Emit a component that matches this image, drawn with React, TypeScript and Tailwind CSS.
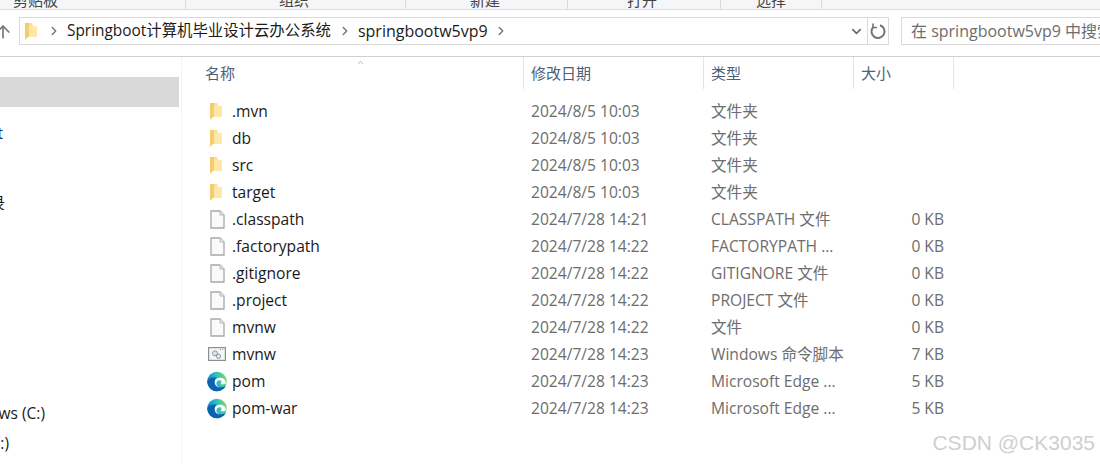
import { ChevronDown, ChevronRight, ChevronUp, ArrowUp } from "lucide-react";

const FONT = "font-['Open_Sans','Noto_Sans_CJK_SC',sans-serif]";

type Kind = "folder" | "file" | "script" | "edge";

const rows: { kind: Kind; name: string; date: string; type: string; size?: string }[] = [
  { kind: "folder", name: ".mvn", date: "2024/8/5 10:03", type: "文件夹" },
  { kind: "folder", name: "db", date: "2024/8/5 10:03", type: "文件夹" },
  { kind: "folder", name: "src", date: "2024/8/5 10:03", type: "文件夹" },
  { kind: "folder", name: "target", date: "2024/8/5 10:03", type: "文件夹" },
  { kind: "file", name: ".classpath", date: "2024/7/28 14:21", type: "CLASSPATH 文件", size: "0 KB" },
  { kind: "file", name: ".factorypath", date: "2024/7/28 14:22", type: "FACTORYPATH ...", size: "0 KB" },
  { kind: "file", name: ".gitignore", date: "2024/7/28 14:22", type: "GITIGNORE 文件", size: "0 KB" },
  { kind: "file", name: ".project", date: "2024/7/28 14:22", type: "PROJECT 文件", size: "0 KB" },
  { kind: "file", name: "mvnw", date: "2024/7/28 14:22", type: "文件", size: "0 KB" },
  { kind: "script", name: "mvnw", date: "2024/7/28 14:23", type: "Windows 命令脚本", size: "7 KB" },
  { kind: "edge", name: "pom", date: "2024/7/28 14:23", type: "Microsoft Edge ...", size: "5 KB" },
  { kind: "edge", name: "pom-war", date: "2024/7/28 14:23", type: "Microsoft Edge ...", size: "5 KB" },
];

function FolderIcon() {
  return (
    <svg width="12" height="18" viewBox="0 0 12 18" className="shrink-0">
      <path d="M0 1h7l1 3h4v11H0z" fill="#fbe094" />
      <path d="M4 4h8v11H4z" fill="#fde8a8" />
      <path d="M0 1h4v13l-4 4z" fill="#f5cd70" />
    </svg>
  );
}

function FileIcon() {
  return (
    <svg width="15" height="19" viewBox="0 0 15 19">
      <path d="M1 1h9l4 4v13H1z" fill="#fafafa" stroke="#a8a8a8" strokeWidth="1.300" />
      <path d="M10 1v4h4" fill="#ececec" stroke="#b5b5b5" />
    </svg>
  );
}

function ScriptIcon() {
  return (
    <svg width="18" height="14" viewBox="0 0 18 14">
      <rect x=".6" y=".6" width="16.800" height="12.800" fill="#f6f6f6" stroke="#8e8e8e" strokeWidth="1.200" />
      <path d="M12 2.500h4" stroke="#9a9a9a" strokeDasharray="1 1" />
      <circle cx="7" cy="6.300" r="2.500" fill="#dde3ea" stroke="#8a97a6" />
      <circle cx="10.500" cy="9.300" r="2.100" fill="#e6eaf0" stroke="#8a97a6" />
    </svg>
  );
}

function EdgeIcon() {
  return (
    <svg width="21" height="21" viewBox="0 0 22 22">
      <defs>
        <linearGradient id="edgeTop" x1="0" y1="0.600" x2="1" y2="0.300">
          <stop offset="0" stopColor="#0f7fc9" />
          <stop offset="0.500" stopColor="#27bcc9" />
          <stop offset="1" stopColor="#7bdc5f" />
        </linearGradient>
      </defs>
      <circle cx="11" cy="11" r="10.700" fill="url(#edgeTop)" />
      <path d="M.3 11.500C1 18 6 21.700 11 21.700c4 0 7.500-2 9.700-5.700-2.500 1.300-5 1.500-7 1-3-.8-5.200-3.400-5.200-6.200 0-2 1-3.200 2-4C6 6.200.8 7.500.3 11.500z" fill="#0b62ad" />
      <path d="M8.500 11.800c0-3.200 2.500-5 6-5 3.300 0 6 2.100 6.300 5.400.1 1.500-1 1.800-2.500 1.800h-3.300c-.1-.9 1-1.600 1-2.700 0-1-.9-1.700-2.300-1.700-1.900 0-3.300 1.400-3.300 3.500 0 2.200 1.500 3.700 3.900 4.200-3.400.5-5.800-2.600-5.800-5.500z" fill="#fff" />
    </svg>
  );
}

function RefreshIcon() {
  return (
    <svg width="18" height="18" viewBox="0 0 18 18" fill="none" stroke="#737373" strokeWidth="2">
      <path d="M11 3.300A6.500 6.500 0 1 1 4.300 5" />
      <path d="M4 1.500V5.500H8" strokeWidth="1.600" />
    </svg>
  );
}

function RowIcon({ kind }: { kind: Kind }) {
  if (kind === "folder") {
    return (
      <div className="pr-[2px]">
        <FolderIcon />
      </div>
    );
  }
  if (kind === "file") return <FileIcon />;
  if (kind === "script") return <ScriptIcon />;
  return <EdgeIcon />;
}

export default function App() {
  return (
    <div className={`relative flex h-[464px] w-[1100px] flex-col overflow-hidden bg-white ${FONT}`}>
      {/* ribbon, cut off at the top of the picture */}
      <div className="flex h-[10px] shrink-0 overflow-hidden border-b border-[#dcdcdc] bg-[#f5f6f7] text-[15px] leading-[18px] text-[#444]">
        <div className="w-[185px] pl-[13px]"><div className="-mt-[9px]">剪贴板</div></div>
        <div className="w-[220px] border-l border-[#dcdcdc] pl-[93px]"><div className="-mt-[9px]">组织</div></div>
        <div className="w-[162px] border-l border-[#dcdcdc] pl-[64px]"><div className="-mt-[9px]">新建</div></div>
        <div className="w-[153px] border-l border-[#dcdcdc] pl-[59px]"><div className="-mt-[9px]">打开</div></div>
        <div className="w-[102px] border-x border-[#dcdcdc] text-center"><div className="-mt-[9px]">选择</div></div>
      </div>

      {/* address row */}
      <div className="flex h-[47px] shrink-0 items-start border-b border-[#cfcfcf] pt-[7px]">
        <ArrowUp className="ml-[-7px] mt-[5px] h-[20px] w-[20px] shrink-0 text-[#777]" strokeWidth={2} />
        <div className="ml-[6px] flex h-[28px] w-[870px] items-center whitespace-nowrap border border-[#d9d9d9] pl-[5px] text-[15.400px] text-[#1a1a1a]">
          <FolderIcon />
          <ChevronRight className="ml-[10px] h-[14px] w-[14px] text-[#777]" strokeWidth={2.500} />
          <span className="ml-[6px]">Springboot计算机毕业设计云办公系统</span>
          <ChevronRight className="ml-[7px] h-[14px] w-[14px] text-[#777]" strokeWidth={2.500} />
          <span className="ml-[6px] text-[16px]">springbootw5vp9</span>
          <ChevronRight className="ml-[6px] h-[14px] w-[14px] text-[#777]" strokeWidth={2.500} />
          <ChevronDown className="ml-auto mr-[3px] h-[15px] w-[15px] text-[#666]" strokeWidth={2.500} />
          <div className="flex h-full w-[21px] shrink-0 items-center justify-center border-l border-[#d9d9d9]">
            <RefreshIcon />
          </div>
        </div>
        <div className="ml-[12px] h-[28px] w-[199px] shrink-0 overflow-hidden whitespace-nowrap border border-r-0 border-[#d9d9d9] pl-[9px] text-[16px] leading-[26px] text-[#6d6d6d]">
          在 springbootw5vp9 中搜索
        </div>
      </div>

      <div className="flex min-h-0 flex-1">
        {/* navigation pane, cut off on the left */}
        <div className="w-[182px] shrink-0 border-r border-[#f3f3f3] pr-[2px] pt-[20px] text-[15.500px] leading-[20px] text-[#1a1a1a]">
          <div className="h-[30px] bg-[#d9d9d9]" />
          <div className="mt-[16px] w-[3px] overflow-hidden"><div className="flex justify-end whitespace-nowrap text-[#0a2a6b]">t</div></div>
          <div className="mt-[50px] flex w-[5px] justify-end overflow-hidden whitespace-nowrap">记录</div>
          <div className="mt-[190px] flex w-[45px] justify-end overflow-hidden whitespace-nowrap">Windows (C:)</div>
          <div className="mt-[10px] flex w-[9px] justify-end overflow-hidden whitespace-nowrap">本地磁盘 (D:)</div>
        </div>

        {/* file list */}
        <div className="relative flex-1">
          <ChevronUp className="absolute left-[171px] top-[1px] h-[9px] w-[15px] text-[#777]" strokeWidth={1.500} />
          <div className="flex h-[32px] text-[15px] leading-[32px] text-[#4c607a]">
            <div className="w-[342px] border-r border-[#e5e5e5] pl-[23px]">名称</div>
            <div className="w-[180px] border-r border-[#e5e5e5] pl-[7px]">修改日期</div>
            <div className="w-[150px] border-r border-[#e5e5e5] pl-[7px]">类型</div>
            <div className="w-[100px] border-r border-[#e5e5e5] pl-[7px]">大小</div>
          </div>
          <div className="mt-[9px] text-[15.600px]">
            {rows.map((r, i) => (
              <div key={i} className="flex h-[27px] items-center whitespace-nowrap text-[#6d6d6d]">
                <div className="flex w-[342px] items-center">
                  <div className="flex w-[50px] justify-center pl-[25px] pr-[5px]">
                    <RowIcon kind={r.kind} />
                  </div>
                  <span className="text-[#1a1a1a]">{r.name}</span>
                </div>
                <div className="w-[180px] pl-[7px]">{r.date}</div>
                <div className="w-[150px] pl-[7px]">{r.type}</div>
                <div className="w-[90px] text-right">{r.size}</div>
              </div>
            ))}
          </div>
        </div>
      </div>

      {/* watermark */}
      <div className="absolute bottom-[6px] right-[5px] font-['Liberation_Sans',sans-serif] text-[21px] text-[#cfcfcf]">CSDN @CK3035</div>
    </div>
  );
}
